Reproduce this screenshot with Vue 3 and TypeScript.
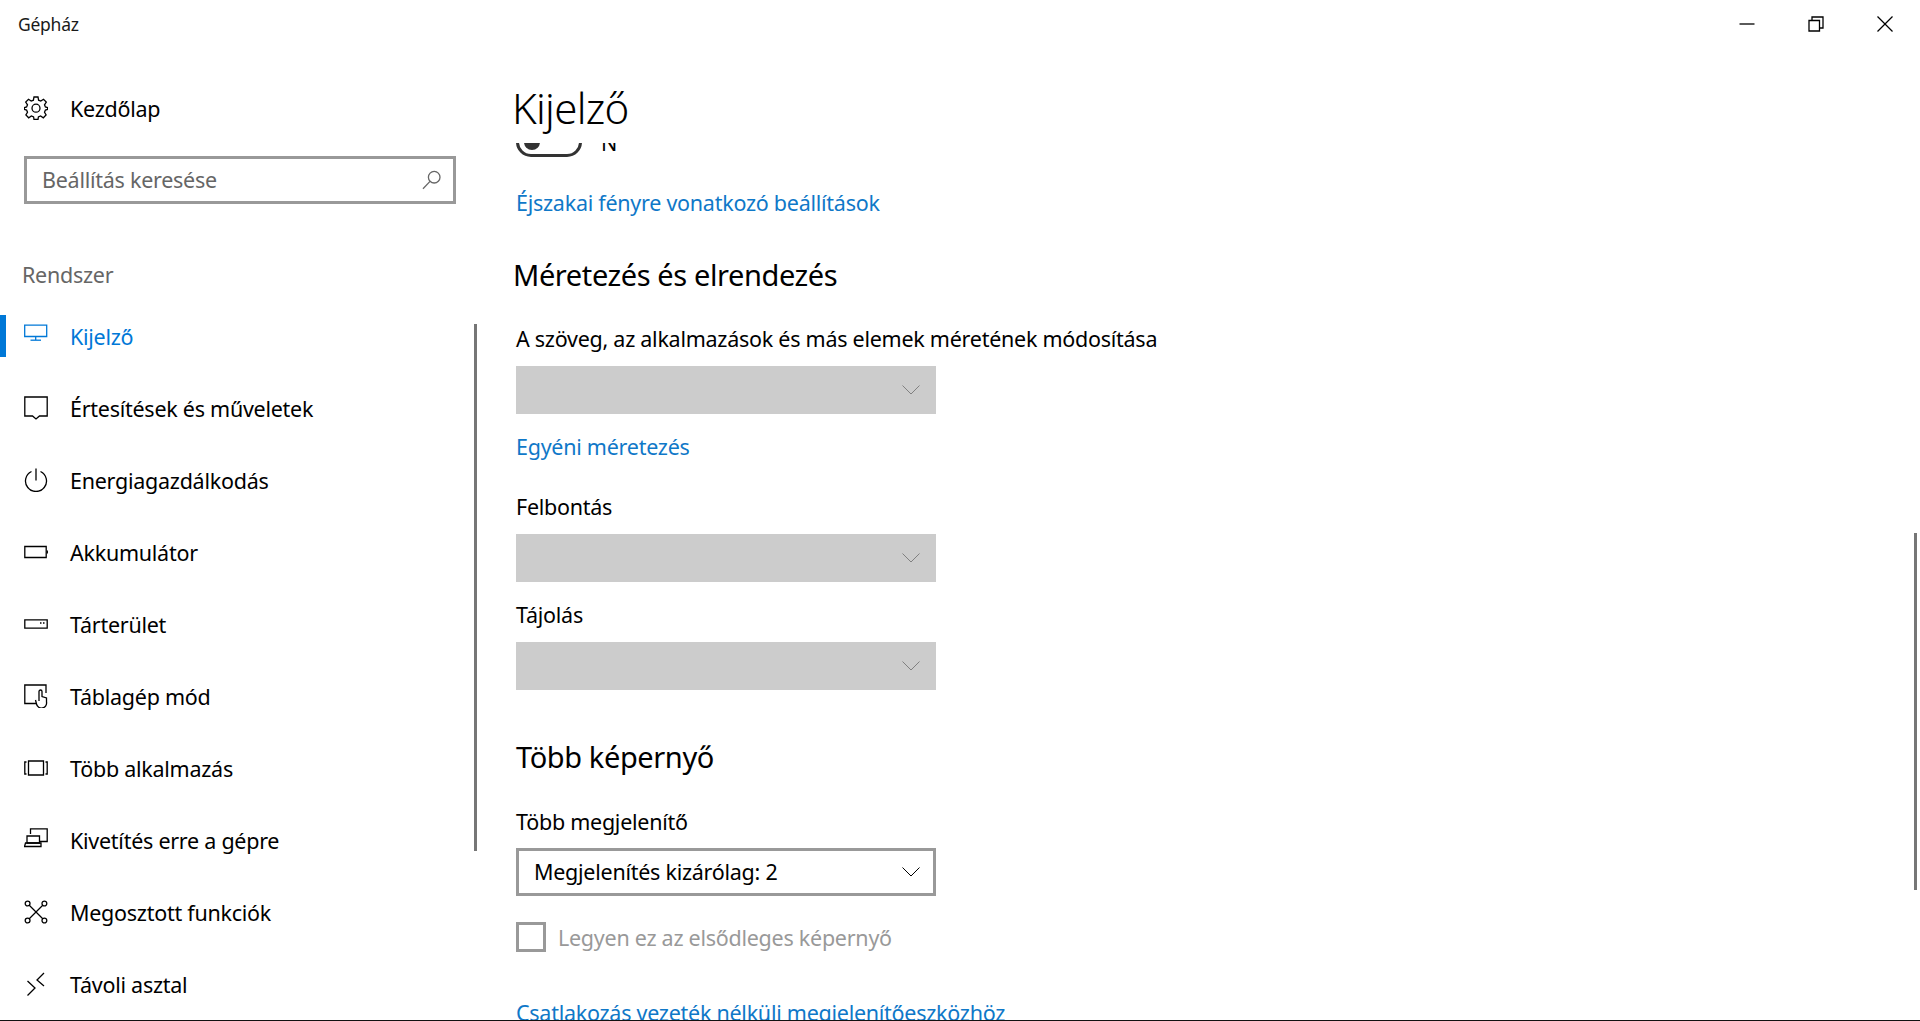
<script setup lang="ts">
interface NavItem {
  label: string;
  paths: string[];
  active?: boolean;
}

const navItems: NavItem[] = [
  { label: "Kijelző", active: true, paths: ["M0.7 1.2H22.7V12.5H0.7Z", "M11.7 12.5V16", "M6.5 16.2H17"] },
  { label: "Értesítések és műveletek", paths: ["M0.8 1H23.2V20H15.5L12 23L8.5 20H0.8Z"] },
  { label: "Energiagazdálkodás", paths: ["M12 0.5V12.5", "M7.5 3.5A10.5 10.5 0 1 0 16.5 3.5"] },
  { label: "Akkumulátor", paths: ["M0.8 6.5H22.2V17.5H0.8Z", "M23.3 10.5V13.5"] },
  { label: "Tárterület", paths: ["M0.8 7.8H23.2V16.2H0.8Z", "M16 11H17.5", "M19 11H20.5"] },
  { label: "Táblagép mód", paths: ["M12 19.5H0.8V1H22V9", "M15 17V7.5A1.5 1.5 0 0 1 18 7.5V12.5L22.5 14V18A5 5 0 0 1 12.5 20L11.5 16"] },
  { label: "Több alkalmazás", paths: ["M4.5 5H19.5V19H4.5Z", "M2.5 6H0.8V18H2.5", "M21.5 6H23.2V18H21.5"] },
  { label: "Kivetítés erre a gépre", paths: ["M6.5 6V0.8H23.2V13.5H16", "M3 8H15.5V15H3Z", "M0.5 18.5H17V15H1.5Z"] },
  { label: "Megosztott funkciók", paths: ["M5 5L19 19", "M19 5L5 19", "M6 3.5A2.4 2.4 0 1 1 1.2 3.5A2.4 2.4 0 1 1 6 3.5Z", "M22.8 3.5A2.4 2.4 0 1 1 18 3.5A2.4 2.4 0 1 1 22.8 3.5Z", "M6 20.5A2.4 2.4 0 1 1 1.2 20.5A2.4 2.4 0 1 1 6 20.5Z", "M22.8 20.5A2.4 2.4 0 1 1 18 20.5A2.4 2.4 0 1 1 22.8 20.5Z"] },
  { label: "Távoli asztal", paths: ["M3.5 9L11 16L3.5 23.5", "M20 1L13 8L20 14"] },
];

const gearPath =
  "M10 1H14L14.6 4.2L16.8 5.1L19.5 3.3L22.3 6.1L20.5 8.8L21.4 11L23.6 11.5V13.5L21.4 14L20.5 16.2L22.1 19L19.3 21.8L16.6 20L14.4 20.9L14 23.5H10L9.6 20.9L7.4 20L4.7 21.8L1.9 19L3.5 16.2L2.6 14L0.4 13.5V11.5L2.6 11L3.5 8.8L1.7 6.1L4.5 3.3L7.2 5.1L9.4 4.2Z";
</script>

<template>
  <div class="window">
    <header class="titlebar">
      <span class="app-name">Gépház</span>
      <div class="window-buttons">
        <span class="win-btn">
          <svg width="16" height="16" viewBox="0 0 16 16"><path d="M0.5 8H15.5" /></svg>
        </span>
        <span class="win-btn">
          <svg width="16" height="16" viewBox="0 0 16 16"><path d="M1 4.5H11.5V15H1Z" /><path d="M4 4.5V1H15V12H11.5" /></svg>
        </span>
        <span class="win-btn">
          <svg width="16" height="16" viewBox="0 0 16 16"><path d="M0.5 0.5L15.5 15.5" /><path d="M15.5 0.5L0.5 15.5" /></svg>
        </span>
      </div>
    </header>

    <div class="body">
      <aside class="sidebar">
        <div class="home-row">
          <svg class="icon" width="24" height="24" viewBox="0 0 24 24">
            <path :d="gearPath" />
            <circle cx="12" cy="12.2" r="4" />
          </svg>
          <span>Kezdőlap</span>
        </div>

        <div class="search">
          <span class="search-text">Beállítás keresése</span>
          <svg width="20" height="20" viewBox="0 0 20 20">
            <circle cx="12.2" cy="7.2" r="5.8" />
            <path d="M8 11.4L1 18.8" />
          </svg>
        </div>

        <div class="section-label">Rendszer</div>

        <nav class="nav">
          <div
            v-for="item in navItems"
            :key="item.label"
            class="nav-item"
            :class="{ active: item.active }"
          >
            <svg class="icon" width="24" height="24" viewBox="0 0 24 24">
              <path v-for="d in item.paths" :key="d" :d="d" />
            </svg>
            <span>{{ item.label }}</span>
          </div>
        </nav>

        <div class="scroll-thumb side-thumb"></div>
      </aside>

      <main class="content">
        <h1 class="page-title">Kijelző</h1>

        <div class="scroller">
          <div class="toggle-row">
            <span class="toggle"><span class="knob"></span></span>
            <span class="toggle-label">N</span>
          </div>

          <a class="link night-link">Éjszakai fényre vonatkozó beállítások</a>

          <h2 class="section-title scale-title">Méretezés és elrendezés</h2>

          <div class="label scale-label">A szöveg, az alkalmazások és más elemek méretének módosítása</div>
          <div class="select disabled">
            <svg width="18" height="10" viewBox="0 0 18 10"><path d="M0.5 0.5L9 9L17.5 0.5" /></svg>
          </div>

          <a class="link custom-link">Egyéni méretezés</a>

          <div class="label res-label">Felbontás</div>
          <div class="select disabled">
            <svg width="18" height="10" viewBox="0 0 18 10"><path d="M0.5 0.5L9 9L17.5 0.5" /></svg>
          </div>

          <div class="label orient-label">Tájolás</div>
          <div class="select disabled">
            <svg width="18" height="10" viewBox="0 0 18 10"><path d="M0.5 0.5L9 9L17.5 0.5" /></svg>
          </div>

          <h2 class="section-title multi-title">Több képernyő</h2>

          <div class="label multi-label">Több megjelenítő</div>
          <div class="select">
            <span>Megjelenítés kizárólag: 2</span>
            <svg width="18" height="10" viewBox="0 0 18 10"><path d="M0.5 0.5L9 9L17.5 0.5" /></svg>
          </div>

          <div class="check-row">
            <span class="checkbox"></span>
            <span>Legyen ez az elsődleges képernyő</span>
          </div>

          <a class="link wireless-link">Csatlakozás vezeték nélküli megjelenítőeszközhöz</a>
        </div>

        <div class="scroll-thumb main-thumb"></div>
      </main>
    </div>
  </div>
</template>

<style scoped>
.window {
  box-sizing: border-box;
  display: flex;
  flex-direction: column;
  height: 1021px;
  overflow: hidden;
  border-bottom: 1px solid #111;
  background: #fff;
  color: #000;
  font-family: "Noto Sans", "Open Sans", sans-serif;
  font-size: 21.5px;
  letter-spacing: -0.26px;
}

svg {
  flex: none;
  fill: none;
  stroke: currentColor;
  stroke-width: 1.3;
}

.titlebar {
  display: flex;
  flex: none;
  justify-content: space-between;
  height: 48px;
}

.app-name {
  padding-left: 18px;
  font-size: 17.5px;
  line-height: 48px;
  color: #1a1a1a;
}

.window-buttons {
  display: flex;
  padding-right: 1px;
}

.win-btn {
  display: flex;
  align-items: center;
  justify-content: center;
  width: 69px;
}

.body {
  display: flex;
  flex: 1;
  min-height: 0;
}

.sidebar {
  position: relative;
  flex: none;
  width: 480px;
}

.home-row {
  display: flex;
  align-items: center;
  gap: 22px;
  height: 48px;
  margin-top: 36px;
  padding-left: 24px;
}

.search {
  box-sizing: border-box;
  display: flex;
  align-items: center;
  justify-content: space-between;
  width: 432px;
  height: 48px;
  margin: 24px 0 0 24px;
  padding: 0 11px 0 15px;
  border: 3px solid #999;
  color: #666;
}

.search-text {
  margin-top: -2px;
}

.section-label {
  height: 32px;
  margin-top: 56px;
  padding-left: 22px;
  line-height: 30px;
  color: #666;
}

.nav {
  margin-top: 8px;
}

.nav-item {
  display: flex;
  align-items: center;
  gap: 22px;
  height: 72px;
  padding-left: 24px;
}

.nav-item.active {
  color: #0078d7;
  position: relative;
}

.nav-item.active::before {
  content: "";
  position: absolute;
  left: 0;
  top: 15px;
  width: 6px;
  height: 42px;
  background: #0078d7;
}

.content {
  position: relative;
  display: flex;
  flex: 1;
  flex-direction: column;
  min-width: 0;
  padding-left: 34px;
}

.page-title {
  box-sizing: border-box;
  flex: none;
  height: 95px;
  margin: 0 0 0 -2px;
  padding-top: 30px;
  font-size: 42px;
  font-weight: 300;
  letter-spacing: -0.7px;
  line-height: 60px;
}

.scroller {
  flex: 1;
  min-height: 0;
  overflow: hidden;
  padding-left: 2px;
}

.toggle-row {
  display: flex;
  align-items: center;
  gap: 19px;
  height: 30px;
  margin-top: -16px;
}

.toggle {
  box-sizing: border-box;
  position: relative;
  width: 66px;
  height: 30px;
  border: 3px solid #333;
  border-radius: 15px;
}

.knob {
  position: absolute;
  left: 5px;
  top: 4px;
  width: 16px;
  height: 16px;
  border-radius: 50%;
  background: #333;
}

.link {
  display: block;
  height: 32px;
  line-height: 30px;
  color: #0f78c8;
}

.label {
  height: 32px;
  line-height: 30px;
}

.section-title {
  height: 40px;
  margin: 0;
  margin-left: -3px;
  font-size: 29px;
  font-weight: 400;
  letter-spacing: -0.4px;
  line-height: 40px;
}

.select {
  box-sizing: border-box;
  display: flex;
  align-items: center;
  justify-content: space-between;
  width: 420px;
  height: 48px;
  margin-top: 10px;
  padding: 0 13px 0 15px;
  border: 3px solid #999;
  line-height: 38px;
}

.select svg {
  margin-left: auto;
  stroke-width: 1;
}

.select.disabled {
  border: 0;
  background: #ccc;
  padding: 0 16px 0 18px;
  color: #808080;
}

.night-link {
  margin-top: 31px;
}

.scale-title {
  margin-top: 35px;
}

.scale-label {
  margin-top: 29px;
}

.custom-link {
  margin-top: 18px;
}

.res-label {
  margin-top: 28px;
}

.orient-label {
  margin-top: 18px;
}

.multi-title {
  margin-top: 47px;
  margin-left: 0;
}

.multi-label {
  margin-top: 29px;
  line-height: 32px;
}

.check-row {
  display: flex;
  align-items: center;
  gap: 12px;
  height: 30px;
  margin-top: 26px;
  color: #999;
}

.checkbox {
  box-sizing: border-box;
  width: 30px;
  height: 30px;
  border: 3px solid #999;
}

.wireless-link {
  margin-top: 45px;
  line-height: 32px;
}

.scroll-thumb {
  position: absolute;
  width: 3px;
  background: #767676;
}

.side-thumb {
  left: 474px;
  top: 276px;
  height: 527px;
}

.main-thumb {
  right: 3px;
  top: 485px;
  height: 357px;
}
</style>
